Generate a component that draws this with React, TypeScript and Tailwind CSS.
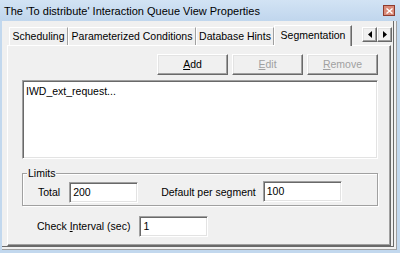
import React from 'react';

const raised =
  'border border-t-white border-l-white border-r-[#696969] border-b-[#696969] shadow-[inset_-1px_-1px_0_#a0a0a0,inset_1px_1px_0_#e3e3e3]';
const sunken =
  'border border-t-[#a0a0a0] border-l-[#a0a0a0] border-r-white border-b-white shadow-[inset_1px_1px_0_#696969,inset_-1px_-1px_0_#e3e3e3]';

function Tab({ label, width, active }: { label: string; width: string; active?: boolean }) {
  if (active) {
    return (
      <div
        className={`${width} relative z-10 -mb-px flex h-[21px] items-center justify-center self-end whitespace-nowrap border-t border-l border-r border-t-white border-l-white border-r-[#696969] bg-[#f0f0f0] shadow-[inset_-1px_0_0_#a0a0a0]`}
      >
        {label}
      </div>
    );
  }
  return (
    <div
      className={`${width} flex h-[18px] items-center justify-center self-end whitespace-nowrap border-t border-l border-r border-t-white border-l-white border-r-[#a0a0a0]`}
    >
      {label}
    </div>
  );
}

function Btn({ label, u, disabled }: { label: string; u: string; disabled?: boolean }) {
  const rest = label.slice(1);
  return (
    <div
      className={`${raised} flex h-[21px] w-[71px] items-center justify-center bg-[#f0f0f0] ${
        disabled ? 'text-[#a0a0a0]' : 'text-black'
      }`}
    >
      <span className="underline underline-offset-1">{u}</span>
      {rest}
    </div>
  );
}

function Arrow({ dir }: { dir: 'l' | 'r' }) {
  return (
    <div className={`${raised} flex h-[15px] w-[15px] items-center justify-center bg-[#f0f0f0]`}>
      <svg width="4" height="7" viewBox="0 0 4 7">
        {dir === 'l' ? <polygon points="4,0 4,7 0,3.5" fill="#000" /> : <polygon points="0,0 0,7 4,3.5" fill="#000" />}
      </svg>
    </div>
  );
}

export default function App() {
  return (
    <div
      className="flex h-[253px] w-[400px] flex-col bg-[#c2d8ee] text-[10.5px] text-black"
      style={{ fontFamily: '"Liberation Sans", Arial, sans-serif' }}
    >
      {/* title bar */}
      <div className="flex h-[21px] shrink-0 items-center justify-between bg-gradient-to-b from-[#d2e3f4] to-[#c0d6ed] pl-[4px] pr-[5px] text-[11px]">
        <span className="pt-[1px]">The 'To distribute' Interaction Queue View Properties</span>
        <div className="flex h-[11px] w-[12px] items-center justify-center border border-[#8e3b2e] bg-[#d98a78]">
          <svg width="7" height="6" viewBox="0 0 7 6">
            <path d="M0.5 0.5 L6.5 5.5 M6.5 0.5 L0.5 5.5" stroke="#fff" strokeWidth="1.4" />
          </svg>
        </div>
      </div>

      {/* body */}
      <div className="mb-[3px] ml-[2px] mr-[3px] flex flex-1 flex-col border-r border-b border-r-[#a0a0a0] border-b-[#a0a0a0] bg-[#f0f0f0] pl-[5px] pr-[2px] pb-[3px] pt-[4px] shadow-[inset_-2px_-2px_0_#f0f0f0,inset_-3px_-3px_0_#696969]">
        {/* tabs */}
        <div className="flex h-[20px] shrink-0 items-end pl-[2px]">
          <Tab label="Scheduling" width="w-[59px]" />
          <Tab label="Parameterized Conditions" width="w-[128px]" />
          <Tab label="Database Hints" width="w-[78px]" />
          <Tab label="Segmentation" width="w-[78px]" active />
          <div className="mb-[3px] ml-[10px] flex self-end">
            <Arrow dir="l" />
            <Arrow dir="r" />
          </div>
        </div>

        {/* panel */}
        <div className="mr-[3px] flex flex-1 flex-col border border-t-white border-l-white border-r-[#696969] border-b-[#696969] pl-[14px] pr-[12px] pt-[8px] shadow-[inset_-1px_-1px_0_#a0a0a0]">
          <div className="flex justify-end gap-[4px]">
            <Btn label="Add" u="A" />
            <Btn label="Edit" u="E" disabled />
            <Btn label="Remove" u="R" disabled />
          </div>

          <div className={`${sunken} mt-[5px] h-[79px] bg-white px-[3px] pt-[3px]`}>
            IWD_ext_request...
          </div>

          {/* Limits */}
          <div className="relative mt-[14px] flex h-[33px] items-center border border-[#a0a0a0] pl-[15px] shadow-[1px_1px_0_white,inset_1px_1px_0_white]">
            <span className="absolute left-[4px] top-[-8px] bg-[#f0f0f0] px-[1px]">Limits</span>
            <span className="mt-[6px]">Total</span>
            <div className={`${sunken} ml-[9px] mt-[6px] flex h-[21px] w-[69px] items-center bg-white px-[3px]`}>200</div>
            <span className="ml-[23px] mt-[6px]">Default per segment</span>
            <div className={`${sunken} ml-[7px] mt-[4px] flex h-[21px] w-[79px] items-center bg-white px-[3px]`}>100</div>
          </div>

          {/* check interval */}
          <div className="mt-[10px] flex items-center pl-[15px]">
            <span>
              Check <span className="underline underline-offset-1">I</span>nterval (sec)
            </span>
            <div className={`${sunken} ml-[9px] flex h-[21px] w-[69px] items-center bg-white px-[3px]`}>1</div>
          </div>
        </div>
      </div>
    </div>
  );
}
